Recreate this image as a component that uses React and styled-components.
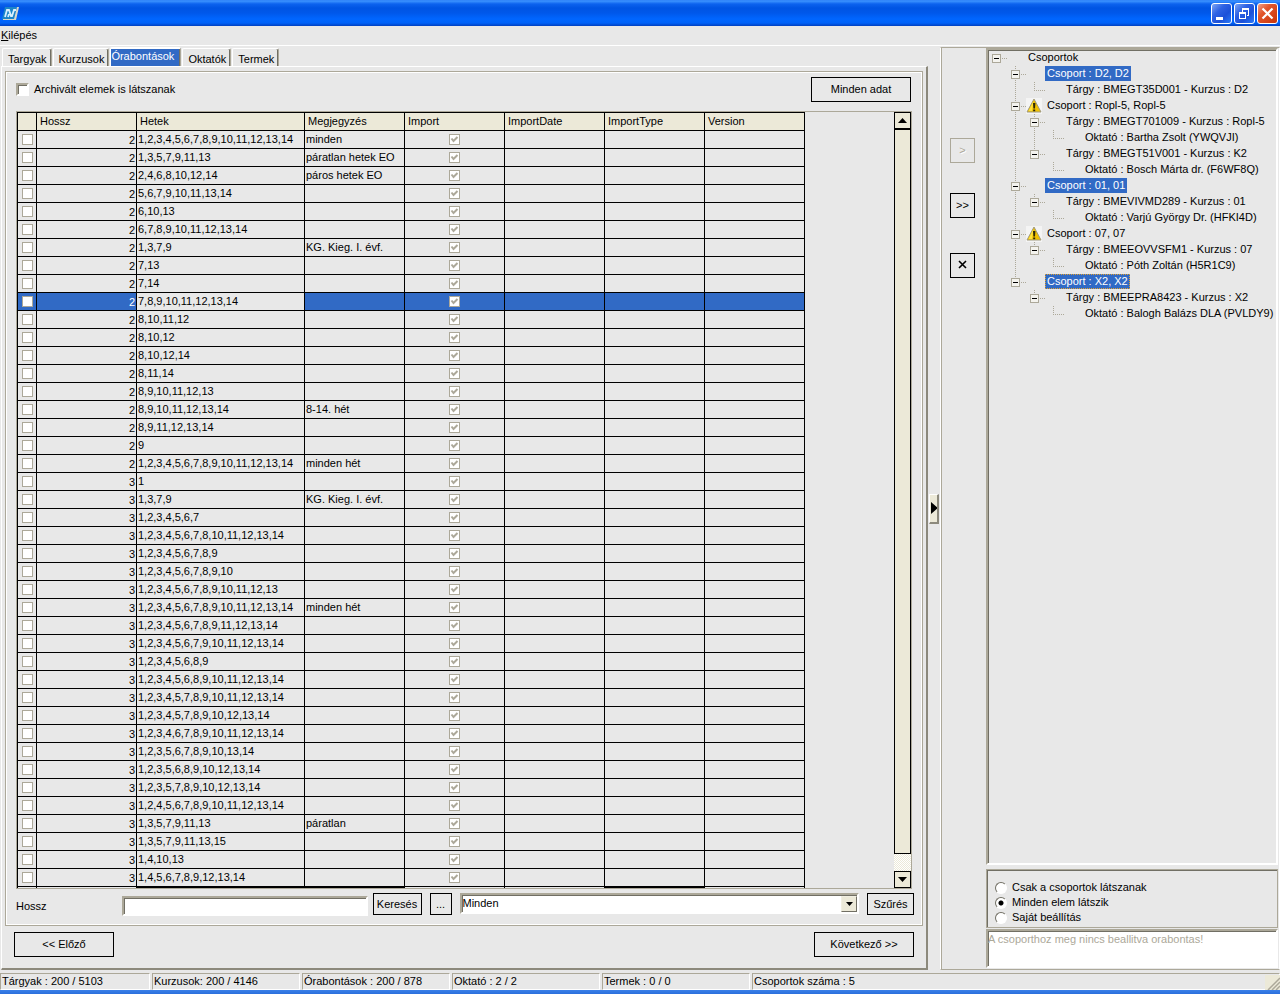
import { useState, Fragment } from 'react';
import styled, { createGlobalStyle, css } from 'styled-components';


const GlobalStyle = createGlobalStyle`
  * {
    box-sizing: border-box;
  }
  body {
    margin: 0;
    background: #e8e8e8;
    color: #000;
    font-family: "Liberation Sans", Arial, sans-serif;
    font-size: 11px;
    line-height: 15px;
  }
  button, input, select, textarea {
    font: inherit;
    color: inherit;
    border-radius: 0;
    margin: 0;
  }
`;

const sunken = css`
  border: 2px solid;
  border-color: #aca899 #fff #fff #aca899;
  box-shadow: inset 1px 1px 0 #716f64;
`;

const Window = styled.div`
  display: flex;
  flex-direction: column;
  height: 100vh;
  overflow: hidden;
`;

const TitleBar = styled.header`
  flex: none;
  display: flex;
  align-items: center;
  justify-content: space-between;
  height: 26px;
  padding: 0 2px;
  background: linear-gradient(#2a7cf5 0, #3c93ff 1px, #0c62ee 4px, #0054e3 8px, #0058ea 13px, #0066ff 19px, #0062f8 23px, #0140c0 26px);
`;

const CaptionButtons = styled.div`
  display: flex;
  gap: 2px;
`;

const CaptionButton = styled.button`
  display: block;
  width: 21px;
  height: 21px;
  padding: 0;
  border: 1px solid #fff;
  border-radius: 3px;
  background: ${props => props.$close
    ? 'linear-gradient(135deg, #f0a088 0, #e2562c 35%, #c83408 100%)'
    : 'linear-gradient(135deg, #7fa6f4 0, #2f63e4 35%, #1c50d8 65%, #2a7af8 100%)'};
`;

const MenuBar = styled.nav`
  flex: none;
  display: flex;
  align-items: center;
  height: 20px;
  padding: 0 1px;
  border-bottom: 1px solid #fff;
`;

const MenuItem = styled.button`
  padding: 0;
  border: 0;
  background: none;
`;

const Body = styled.main`
  flex: 1;
  min-height: 0;
  display: flex;
  padding: 1px 0;
`;

const LeftPane = styled.section`
  flex: 1;
  min-width: 0;
  display: flex;
  flex-direction: column;
`;

const Tabs = styled.div`
  display: flex;
  align-items: flex-end;
  gap: 1px;
  height: 19px;
  padding-left: 2px;
`;

const Tab = styled.button`
  height: 18px;
  padding: 3px 4px 0 5px;
  text-align: left;
  white-space: nowrap;
  background: #e8e8e8;
  border: 1px solid;
  border-color: #fff #aca899 transparent #fff;
  border-bottom: 0;
  border-radius: 2px 2px 0 0;
  box-shadow: inset -1px 0 0 #716f64;

  ${props => props.$active && css`
    height: 20px;
    margin-bottom: -1px;
    padding: 0 6px 3px 0;
    color: #fff;
    background: #316ac5;
    border-top-width: 2px;
  `}
`;

const TabPage = styled.div`
  flex: 1;
  min-height: 0;
  display: flex;
  flex-direction: column;
  margin-left: 1px;
  padding: 4px 3px 11px;
  border: 1px solid;
  border-width: 1px 2px 2px 1px;
  border-color: #fff #8c897c #8c897c #fff;
`;

const Group = styled.div`
  flex: 1;
  min-height: 0;
  display: flex;
  flex-direction: column;
  padding: 5px 8px 10px 10px;
  border: 1px solid #aca899;
  box-shadow: inset 1px 1px 0 #fff, inset -1px -1px 0 #fff;
`;

const TopRow = styled.div`
  display: flex;
  align-items: center;
  justify-content: space-between;
  padding-right: 3px;
  margin-bottom: 9px;
`;

const CheckLabel = styled.label`
  display: flex;
  align-items: center;
  gap: 5px;
`;

const SunkenCheck = styled.input`
  appearance: none;
  width: 13px;
  height: 13px;
  background: #fff;
  ${sunken}
`;

const FlatButton = styled.button`
  flex: none;
  width: ${props => props.$width}px;
  height: ${props => props.$height || 25}px;
  padding: 0;
  background: transparent;
  border: 1px solid ${props => props.disabled ? '#aca899' : '#000'};
  color: ${props => props.disabled ? '#aca899' : '#000'};
  text-shadow: ${props => props.disabled ? '1px 1px 0 #fff' : 'none'};
`;

const GridBox = styled.div`
  flex: 1;
  min-height: 0;
  display: flex;
  justify-content: space-between;
  overflow: hidden;
  margin-right: 2px;
  border: 1px solid #aca899;
`;

const Grid = styled.table`
  flex: none;
  align-self: flex-start;
  table-layout: fixed;
  width: 788px;
  border-spacing: 0;
  border: solid #000;
  border-width: 1px 0 0 1px;
`;

const HeadCell = styled.th`
  height: 18px;
  padding: 0 3px;
  text-align: left;
  font-weight: normal;
  background: #ece9d8;
  border: solid #000;
  border-width: 0 1px 1px 0;
`;

const Cell = styled.td`
  height: 18px;
  padding: ${props => props.$low ? '2px 1px 0' : '1px 1px 0'};
  line-height: 15px;
  white-space: nowrap;
  vertical-align: top;
  text-align: ${props => props.$align || 'left'};
  color: ${props => props.$selected ? '#fff' : '#000'};
  background: ${props => props.$selected ? '#316ac5' : 'transparent'};
  border: solid #000;
  border-width: 0 1px 1px 0;
`;

const EdgeCell = styled.td`
  height: 2px;
  padding: 0;
  border-right: 1px solid #000;
  background: ${props => props.$dark ? '#000' : 'transparent'};
`;

const FlatCheck = styled.input`
  appearance: none;
  display: block;
  width: 11px;
  height: 11px;
  margin: 2px auto 0 !important;
  background: #fff;
  border: 1px solid #aca899;
`;

const TickBox = styled.label`
  position: relative;
  display: block;
  width: 11px;
  margin: 0 auto;

  svg {
    position: absolute;
    left: 0;
    top: 0;
    pointer-events: none;
  }
`;

const ScrollBar = styled.div`
  flex: none;
  width: 17px;
  display: flex;
  flex-direction: column;
  background: repeating-conic-gradient(#fff 0 25%, #ece9d8 0 50%) 0 0 / 2px 2px;
`;

const ScrollButton = styled.button`
  flex: none;
  height: 17px;
  padding: 0;
  display: flex;
  align-items: center;
  justify-content: center;
  background: #ece9d8;
  border: 1px solid #000;
`;

const Thumb = styled.div`
  flex: 1;
  margin-bottom: 17px;
  background: #ece9d8;
  border: 1px solid #000;
`;

const FilterRow = styled.div`
  display: flex;
  align-items: center;
  height: 22px;
  margin-top: 4px;
  gap: 8px;
`;

const FilterLabel = styled.label`
  flex: none;
  width: 98px;
  padding-top: 4px;
`;

const FilterInput = styled.input`
  flex: 242 1 0;
  min-width: 0;
  height: 20px;
  margin: 3px -3px 0 0;
  background: #fff;
  outline: 0;
  ${sunken}
`;

const ComboBox = styled.div`
  flex: 403 1 0;
  min-width: 0;
  display: flex;
  height: 21px;
  align-self: flex-start;
  background: #fff;
  position: relative;
  ${sunken}
`;

const Combo = styled.select`
  appearance: none;
  flex: 1;
  min-width: 0;
  padding: 0 1px;
  border: 0;
  background: none;
  outline: 0;
`;

const ComboArrow = styled.span`
  position: absolute;
  right: 0;
  top: 1px;
  bottom: 0;
  width: 16px;
  display: flex;
  align-items: center;
  justify-content: center;
  pointer-events: none;
  background: #ece9d8;
  border: 1px solid;
  border-color: #f1efe2 #716f64 #716f64 #f1efe2;
`;

const WizardRow = styled.div`
  display: flex;
  justify-content: space-between;
  padding: 6px 9px 0;
`;

const Splitter = styled.div`
  flex: none;
  width: 12px;
  display: flex;
  align-items: center;
  padding-left: 1px;
`;

const SplitterGrip = styled.button`
  width: 10px;
  height: 30px;
  padding: 0 0 0 1px;
  display: flex;
  align-items: center;
  background: #ece9d8;
  border: solid;
  border-width: 1px 2px 2px 1px;
  border-color: #fff #8c897c #8c897c #fff;
`;

const RightPane = styled.section`
  flex: none;
  width: 340px;
  display: flex;
  border: 1px solid;
  border-color: #aca899 #fff #aca899 #fff;
  box-shadow: inset 1px 0 0 #aca899;
`;

const MoveButtons = styled.div`
  flex: none;
  width: 45px;
  display: flex;
  flex-direction: column;
  align-items: center;
  padding-top: 90px;
  padding-right: 2px;
`;

const MoveSlot = styled.div`
  height: ${props => props.$height}px;
`;

const TreeColumn = styled.div`
  flex: 1;
  min-width: 0;
  display: flex;
  flex-direction: column;
  padding: 0 1px 1px 0;
`;

const Tree = styled.div`
  flex: 1;
  min-height: 0;
  overflow: hidden;
  ${sunken}
`;

const TreeRow = styled.div`
  display: flex;
  height: 16px;
`;

const GuideCell = styled.svg`
  flex: none;
  display: block;
`;

const IconSlot = styled.span`
  flex: none;
  width: 19px;
  height: 16px;
`;

const NodeLabel = styled.span`
  height: 15px;
  padding: 0 2px;
  white-space: nowrap;
  color: ${props => props.$selected ? '#fff' : '#000'};
  background: ${props => props.$selected ? '#316ac5' : 'transparent'};
  outline: ${props => props.$focused ? '1px dotted #e0a030' : 'none'};
  outline-offset: -1px;
`;

const RadioGroup = styled.fieldset`
  min-width: 0;
  margin: 4px 0 1px;
  padding: 10px 8px 2px;
  border: 1px solid #aca899;
  box-shadow: inset 1px 1px 0 #716f64;
`;

const RadioLabel = styled.label`
  display: flex;
  align-items: center;
  gap: 5px;
  height: 15px;
`;

const Radio = styled.input`
  appearance: none;
  width: 12px;
  height: 12px;
  border: 1px solid;
  border-color: #716f64 #fff #fff #716f64;
  border-radius: 50%;
  background: #fff;

  &:checked {
    background: radial-gradient(circle, #000 2px, #fff 3px);
  }
`;

const Message = styled.textarea`
  display: block;
  width: 100%;
  height: 39px;
  padding: 1px 0 0;
  resize: none;
  outline: 0;
  overflow: hidden;
  background: #fff;
  color: #aca899;
  ${sunken}
`;

const StatusBar = styled.footer`
  flex: none;
  display: flex;
  gap: 2px;
  height: 19px;
  padding-top: 2px;
  position: relative;
`;

const StatusCell = styled.div`
  flex: ${props => props.$last ? '1' : 'none'};
  width: ${props => props.$first ? 150 : 148}px;
  padding-left: 1px;
  white-space: nowrap;
  border: 1px solid;
  border-color: #aca899 #fff #fff #aca899;
`;

const SizeGrip = styled.svg`
  position: absolute;
  right: 0;
  bottom: 0;
`;

const TaskEdge = styled.div`
  flex: none;
  height: 4px;
  background: linear-gradient(#3a80e8, #2a6fdc);
`;


const tabs = ['Targyak', 'Kurzusok', 'Órabontások', 'Oktatók', 'Termek'];

const columns = ['Hossz', 'Hetek', 'Megjegyzés', 'Import', 'ImportDate', 'ImportType', 'Version'];

const rows = [
  [2, '1,2,3,4,5,6,7,8,9,10,11,12,13,14', 'minden'],
  [2, '1,3,5,7,9,11,13', 'páratlan hetek EO'],
  [2, '2,4,6,8,10,12,14', 'páros hetek EO'],
  [2, '5,6,7,9,10,11,13,14'],
  [2, '6,10,13'],
  [2, '6,7,8,9,10,11,12,13,14'],
  [2, '1,3,7,9', 'KG. Kieg. I. évf.'],
  [2, '7,13'],
  [2, '7,14'],
  [2, '7,8,9,10,11,12,13,14'],
  [2, '8,10,11,12'],
  [2, '8,10,12'],
  [2, '8,10,12,14'],
  [2, '8,11,14'],
  [2, '8,9,10,11,12,13'],
  [2, '8,9,10,11,12,13,14', '8-14. hét'],
  [2, '8,9,11,12,13,14'],
  [2, '9'],
  [2, '1,2,3,4,5,6,7,8,9,10,11,12,13,14', 'minden hét'],
  [3, '1'],
  [3, '1,3,7,9', 'KG. Kieg. I. évf.'],
  [3, '1,2,3,4,5,6,7'],
  [3, '1,2,3,4,5,6,7,8,10,11,12,13,14'],
  [3, '1,2,3,4,5,6,7,8,9'],
  [3, '1,2,3,4,5,6,7,8,9,10'],
  [3, '1,2,3,4,5,6,7,8,9,10,11,12,13'],
  [3, '1,2,3,4,5,6,7,8,9,10,11,12,13,14', 'minden hét'],
  [3, '1,2,3,4,5,6,7,8,9,11,12,13,14'],
  [3, '1,2,3,4,5,6,7,9,10,11,12,13,14'],
  [3, '1,2,3,4,5,6,8,9'],
  [3, '1,2,3,4,5,6,8,9,10,11,12,13,14'],
  [3, '1,2,3,4,5,7,8,9,10,11,12,13,14'],
  [3, '1,2,3,4,5,7,8,9,10,12,13,14'],
  [3, '1,2,3,4,6,7,8,9,10,11,12,13,14'],
  [3, '1,2,3,5,6,7,8,9,10,13,14'],
  [3, '1,2,3,5,6,8,9,10,12,13,14'],
  [3, '1,2,3,5,7,8,9,10,12,13,14'],
  [3, '1,2,4,5,6,7,8,9,10,11,12,13,14'],
  [3, '1,3,5,7,9,11,13', 'páratlan'],
  [3, '1,3,5,7,9,11,13,15'],
  [3, '1,4,10,13'],
  [3, '1,4,5,6,7,8,9,12,13,14'],
];

const tree = {
  text: 'Csoportok',
  children: [
    { text: 'Csoport : D2, D2', selected: true, children: [
      { text: 'Tárgy : BMEGT35D001 - Kurzus : D2' },
    ]},
    { text: 'Csoport : Ropl-5, Ropl-5', warning: true, children: [
      { text: 'Tárgy : BMEGT701009 - Kurzus : Ropl-5', children: [
        { text: 'Oktató : Bartha Zsolt (YWQVJI)' },
      ]},
      { text: 'Tárgy : BMEGT51V001 - Kurzus : K2', children: [
        { text: 'Oktató : Bosch Márta dr. (F6WF8Q)' },
      ]},
    ]},
    { text: 'Csoport : 01, 01', selected: true, children: [
      { text: 'Tárgy : BMEVIVMD289 - Kurzus : 01', children: [
        { text: 'Oktató : Varjú György Dr. (HFKI4D)' },
      ]},
    ]},
    { text: 'Csoport : 07, 07', warning: true, children: [
      { text: 'Tárgy : BMEEOVVSFM1 - Kurzus : 07', children: [
        { text: 'Oktató : Póth Zoltán (H5R1C9)' },
      ]},
    ]},
    { text: 'Csoport : X2, X2', selected: true, focused: true, children: [
      { text: 'Tárgy : BMEEPRA8423 - Kurzus : X2', children: [
        { text: 'Oktató : Balogh Balázs DLA (PVLDY9)' },
      ]},
    ]},
  ],
};

const radios = ['Csak a csoportok látszanak', 'Minden elem látszik', 'Saját beállítás'];

const statuses = [
  'Tárgyak : 200 / 5103',
  'Kurzusok: 200 / 4146',
  'Órabontások : 200 / 878',
  'Oktató : 2 / 2',
  'Termek : 0 / 0',
  'Csoportok száma : 5',
];


function Guide({ up, down, node, box }) {
  return (
    <GuideCell width="19" height="16" shapeRendering="crispEdges" fill="none" stroke="#aca899">
      {up && <path d="M8.5 0V8" strokeDasharray="1 1" />}
      {down && <path d="M8.5 8V16" strokeDasharray="1 1" />}
      {node && <path d="M8 8.5H19" strokeDasharray="1 1" />}
      {box && <rect x="4.5" y="4.5" width="8" height="8" fill="#f4f3ee" />}
      {box && <path d="M6 8.5H11" stroke="#000" />}
    </GuideCell>
  );
}

function WarningIcon() {
  return (
    <svg width="16" height="16" viewBox="0 0 16 16">
      <rect width="16" height="16" fill="#f4f4f4" />
      <path d="M8 1 15 14H1z" fill="#f0c000" stroke="#a09a80" strokeLinejoin="round" />
      <path d="M7.5 3 6 13H2.5z" fill="#ffe23c" />
      <path d="M7 5h2.4L9 10.5H7.4zM7.2 11.5h2v1.8h-2z" fill="#2c2808" />
    </svg>
  );
}

function TreeNode({ node, level = 0, trail = [], last = true }) {
  const children = node.children || [];
  return (
    <Fragment>
      <TreeRow>
        {trail.map((more, idx) => <Guide key={idx} up={more} down={more} />)}
        <Guide up={level > 0} down={level > 0 && !last} node box={children.length > 0} />
        <IconSlot>{node.warning && <WarningIcon />}</IconSlot>
        <NodeLabel $selected={node.selected} $focused={node.focused}>{node.text}</NodeLabel>
      </TreeRow>
      {children.map((child, idx) => (
        <TreeNode
          key={child.text}
          node={child}
          level={level + 1}
          trail={[...trail, level > 0 && !last]}
          last={idx === children.length - 1}
        />
      ))}
    </Fragment>
  );
}

function Logo() {
  return (
    <svg width="17" height="15" viewBox="0 0 17 15">
      <path d="M3 1h12l-3 12H0z" fill="#1c86c8" />
      <path d="M15 1h2l-3 13H1v-1h11z" fill="#d8d8c8" />
      <path d="M3 11 5 4h2l2 6h1l2-6h2M6 11l1-3" fill="none" stroke="#d8f0ff" strokeWidth="1.8" />
    </svg>
  );
}

export default function App() {
  const [activeTab, setActiveTab] = useState(2);
  const [selectedRow, setSelectedRow] = useState(9);
  const [view, setView] = useState(1);

  return (
    <Window>
      <GlobalStyle />

      <TitleBar>
        <Logo />
        <CaptionButtons>
          <CaptionButton aria-label="Minimize">
            <svg width="19" height="19" fill="#fff"><path d="M4 13h7v3H4z" /></svg>
          </CaptionButton>
          <CaptionButton aria-label="Restore">
            <svg width="19" height="19" fill="none" stroke="#fff" shapeRendering="crispEdges">
              <path d="M7 5.5h7M13.5 6v6M7.5 5v3M12 11.5h2" />
              <path d="M7 4.5h7M4 8.5h7" />
              <path d="M4.5 9.5h6v5h-6z" />
            </svg>
          </CaptionButton>
          <CaptionButton $close aria-label="Close">
            <svg width="19" height="19" stroke="#fff" strokeWidth="2.2"><path d="M4.5 4.5 14.5 14.5M14.5 4.5 4.5 14.5" /></svg>
          </CaptionButton>
        </CaptionButtons>
      </TitleBar>

      <MenuBar>
        <MenuItem><u>K</u>ilépés</MenuItem>
      </MenuBar>

      <Body>
        <LeftPane>
          <Tabs role="tablist">
            {tabs.map((tab, idx) => (
              <Tab key={tab} role="tab" $active={idx === activeTab} onClick={() => setActiveTab(idx)}>{tab}</Tab>
            ))}
          </Tabs>

          <TabPage>
            <Group>
              <TopRow>
                <CheckLabel>
                  <SunkenCheck type="checkbox" />
                  Archivált elemek is látszanak
                </CheckLabel>
                <FlatButton $width={100}>Minden adat</FlatButton>
              </TopRow>

              <GridBox>
                <Grid>
                  <colgroup>
                    <col style={{width: '19px'}} />
                    <col style={{width: '100px'}} />
                    <col style={{width: '168px'}} />
                    {columns.slice(2).map(name => <col key={name} style={{width: '100px'}} />)}
                  </colgroup>
                  <thead>
                    <tr>
                      <HeadCell />
                      {columns.map(name => <HeadCell key={name}>{name}</HeadCell>)}
                    </tr>
                  </thead>
                  <tbody>
                    {rows.map(([length, weeks, note], idx) => {
                      const selected = idx === selectedRow;
                      return (
                        <tr key={idx} onClick={() => setSelectedRow(idx)}>
                          <Cell $selected={selected}><FlatCheck type="checkbox" aria-label={weeks} /></Cell>
                          <Cell $selected={selected} $align="right" $low>{length}</Cell>
                          {/* the cell being edited keeps its plain colours */}
                          <Cell>{weeks}</Cell>
                          <Cell $selected={selected}>{note}</Cell>
                          <Cell $selected={selected}>
                            <TickBox>
                              <FlatCheck type="checkbox" aria-label="Import" checked readOnly />
                              <svg width="11" height="11" fill="none" stroke="#aca899" strokeWidth="2">
                                <path d="M2.5 4.5 4.5 7 8.5 3" />
                              </svg>
                            </TickBox>
                          </Cell>
                          <Cell $selected={selected} />
                          <Cell $selected={selected} />
                          <Cell $selected={selected} />
                        </tr>
                      )
                    })}
                    <tr>
                      {['', ...columns].map(name => (
                        <EdgeCell key={name} $dark={['Hetek', 'Megjegyzés', 'ImportType'].includes(name)} />
                      ))}
                    </tr>
                  </tbody>
                </Grid>

                <ScrollBar>
                  <ScrollButton aria-label="Up">
                    <svg width="9" height="5"><path d="M0 5 4.5 0 9 5z" /></svg>
                  </ScrollButton>
                  <Thumb />
                  <ScrollButton aria-label="Down">
                    <svg width="9" height="5"><path d="M0 0h9L4.5 5z" /></svg>
                  </ScrollButton>
                </ScrollBar>
              </GridBox>

              <FilterRow>
                <FilterLabel htmlFor="length">Hossz</FilterLabel>
                <FilterInput id="length" type="text" />
                <FlatButton $width={49} $height={22}>Keresés</FlatButton>
                <FlatButton $width={22} $height={22}>...</FlatButton>
                <ComboBox>
                  <Combo aria-label="Szűrés" defaultValue="Minden">
                    <option>Minden</option>
                  </Combo>
                  <ComboArrow>
                    <svg width="7" height="4"><path d="M0 0h7L3.5 4z" /></svg>
                  </ComboArrow>
                </ComboBox>
                <FlatButton $width={47} $height={22}>Szűrés</FlatButton>
              </FilterRow>
            </Group>

            <WizardRow>
              <FlatButton $width={100}>&lt;&lt; Előző</FlatButton>
              <FlatButton $width={100}>Következő &gt;&gt;</FlatButton>
            </WizardRow>
          </TabPage>
        </LeftPane>

        <Splitter>
          <SplitterGrip aria-label="Collapse">
            <svg width="7" height="12"><path d="M0 0 7 6 0 12z" /></svg>
          </SplitterGrip>
        </Splitter>

        <RightPane>
          <MoveButtons>
            <MoveSlot $height={55}><FlatButton $width={25} disabled>&gt;</FlatButton></MoveSlot>
            <MoveSlot $height={60}><FlatButton $width={25}>&gt;&gt;</FlatButton></MoveSlot>
            <MoveSlot $height={25}>
              <FlatButton $width={25} aria-label="Remove">
                <svg width="9" height="9" stroke="#000" strokeWidth="1.6"><path d="M1 1 8 8M8 1 1 8" /></svg>
              </FlatButton>
            </MoveSlot>
          </MoveButtons>

          <TreeColumn>
            <Tree>
              <TreeNode node={tree} />
            </Tree>
            <RadioGroup>
              {radios.map((text, idx) => (
                <RadioLabel key={text}>
                  <Radio type="radio" name="view" checked={view === idx} onChange={() => setView(idx)} />
                  {text}
                </RadioLabel>
              ))}
            </RadioGroup>
            <Message aria-label="Message" readOnly value="A csoporthoz meg nincs beallitva orabontas!" />
          </TreeColumn>
        </RightPane>
      </Body>

      <StatusBar>
        {statuses.map((text, idx) => (
          <StatusCell key={text} $first={idx === 0} $last={idx === statuses.length - 1}>{text}</StatusCell>
        ))}
        <SizeGrip width="15" height="15" stroke="#aca899" strokeWidth="1.5">
          <rect width="15" height="15" fill="#ece9d8" stroke="none" />
          <path d="M3 15 15 3M7 15 15 7M11 15 15 11" />
        </SizeGrip>
      </StatusBar>
      <TaskEdge />
    </Window>
  );
}
